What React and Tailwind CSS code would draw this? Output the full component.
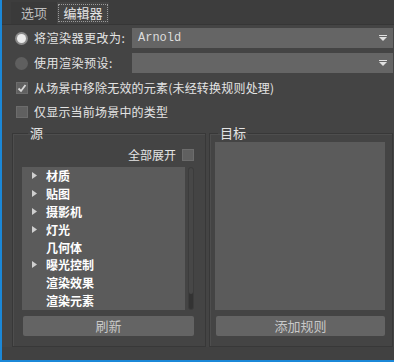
import React from 'react';

const CJK = { fontFamily: '"Noto Sans CJK SC", "Noto Sans", sans-serif' };

const Radio = ({ checked }) => (
    <span className={`w-[13px] h-[13px] rounded-full shrink-0 flex items-center justify-center ${checked ? 'bg-[#8c8c8c]' : 'bg-[#5f5f5f]'}`}>
        {checked && <span className="w-[9px] h-[9px] rounded-full bg-[#ececec]" />}
    </span>
);

const Check = ({ checked }) => (
    <span className="w-[12px] h-[12px] shrink-0 bg-[#606060] border border-[#6c6c6c] flex items-center justify-center">
        {checked && (
            <svg width="10" height="10" viewBox="0 0 10 10">
                <path d="M1.5 5.5 L4 8 L8.5 2" stroke="#d8d8d8" strokeWidth="1.8" fill="none" />
            </svg>
        )}
    </span>
);

const Caret = () => (
    <svg width="8" height="7" viewBox="0 0 8 7" className="shrink-0">
        <rect x="0" y="0" width="8" height="1" fill="#e0e0e0" />
        <path d="M0 2 L8 2 L4 6 Z" fill="#e0e0e0" />
    </svg>
);

const Select = ({ value }) => (
    <div className="flex-1 h-[20px] bg-[#656565] flex items-center justify-between pl-[6px] pr-[6px]">
        <span className="text-[12px] text-[#dcdcdc] leading-none" style={{ fontFamily: '"Liberation Mono", monospace' }}>{value}</span>
        <Caret />
    </div>
);

const items = [
    ['材质', true],
    ['贴图', true],
    ['摄影机', true],
    ['灯光', true],
    ['几何体', false],
    ['曝光控制', true],
    ['渲染效果', false],
    ['渲染元素', false],
];

const App = () => {
    return (
        <div className="w-[394px] h-[362px] bg-[#444444] border-l-2 border-b-2 border-[#1b88d8] flex flex-col text-[#e4e4e4] text-[12px]" style={CJK}>
            <div className="h-[25px] bg-[#3d3d3d] border-b border-[#363636] flex items-end pl-[9px] shrink-0 text-[13px]">
                <div className="h-[22px] w-[46px] flex items-center justify-center text-[#bdbdbd] bg-[#3a3a3a]">选项</div>
                <div className="h-[22px] w-[52px] bg-[#444444] flex items-center justify-center">
                    <span className="border border-dotted border-[#9a9a9a] px-[4px] h-[18px] flex items-center">编辑器</span>
                </div>
            </div>

            <div className="flex items-center h-[20px] mt-[3px] pl-[13px] pr-[1px]">
                <Radio checked />
                <span className="ml-[6px] w-[98px] tracking-[0.5px]">将渲染器更改为:</span>
                <Select value="Arnold" />
            </div>
            <div className="flex items-center h-[20px] mt-[5px] pl-[13px] pr-[1px]">
                <Radio />
                <span className="ml-[6px] w-[98px] tracking-[0.5px]">使用渲染预设:</span>
                <Select value="" />
            </div>
            <div className="flex items-center h-[20px] mt-[5px] pl-[14px]">
                <Check checked />
                <span className="ml-[6px] tracking-[0.2px]">从场景中移除无效的元素(未经转换规则处理)</span>
            </div>
            <div className="flex items-center h-[20px] mt-[4px] pl-[14px]">
                <Check />
                <span className="ml-[6px] tracking-[0.2px]">仅显示当前场景中的类型</span>
            </div>

            <div className="flex mt-[4px] pl-[10px] pr-[1px] gap-[3px]">
                <fieldset className="w-[194px] h-[221px] border border-[#383838] shadow-[inset_1px_1px_0_#4e4e4e] pl-[9px] pr-[11px] flex flex-col">
                    <legend className="ml-[6px] px-[2px] leading-[14px] text-[13px]">源</legend>
                    <div className="flex items-center justify-end gap-[6px] mt-[8px] h-[14px]">
                        <span>全部展开</span>
                        <Check />
                    </div>
                    <div className="flex mt-[5px] gap-[3px]">
                        <div className="w-[163px] h-[143px] bg-[#5b5b5b] overflow-hidden">
                            {items.map(([label, arrow]) => (
                                <div key={label} className="flex items-center h-[17.8px] leading-[17px]">
                                    <span className="w-[24px] flex justify-center">
                                        {arrow && (
                                            <svg width="5" height="7" viewBox="0 0 5 7">
                                                <path d="M0 0 L5 3.5 L0 7 Z" fill="#cfcfcf" />
                                            </svg>
                                        )}
                                    </span>
                                    <span className="font-bold text-white">{label}</span>
                                </div>
                            ))}
                        </div>
                        <div className="w-[6px] h-[143px] rounded-full bg-[#333333] border border-[#3c3c3c] flex flex-col">
                            <div className="h-[126px] rounded-full bg-[#474747]" />
                        </div>
                    </div>
                    <button className="mt-[6px] h-[20px] ml-[1px] rounded-[2px] bg-[#646464] text-[#c8c8c8] text-[13px]">刷新</button>
                </fieldset>

                <fieldset className="flex-1 h-[221px] border border-[#383838] shadow-[inset_1px_1px_0_#4e4e4e] pl-[5px] pr-[7px] flex flex-col">
                    <legend className="ml-[3px] px-[2px] leading-[14px] text-[13px]">目标</legend>
                    <div className="mt-[2px] h-[168px] bg-[#5b5b5b]" />
                    <button className="mt-[6px] h-[20px] ml-[1px] rounded-[2px] bg-[#646464] text-[#c8c8c8] text-[13px]">添加规则</button>
                </fieldset>
            </div>
            <div className="flex-1 bg-[#414141]" />
        </div>
    );
};

export default App;
